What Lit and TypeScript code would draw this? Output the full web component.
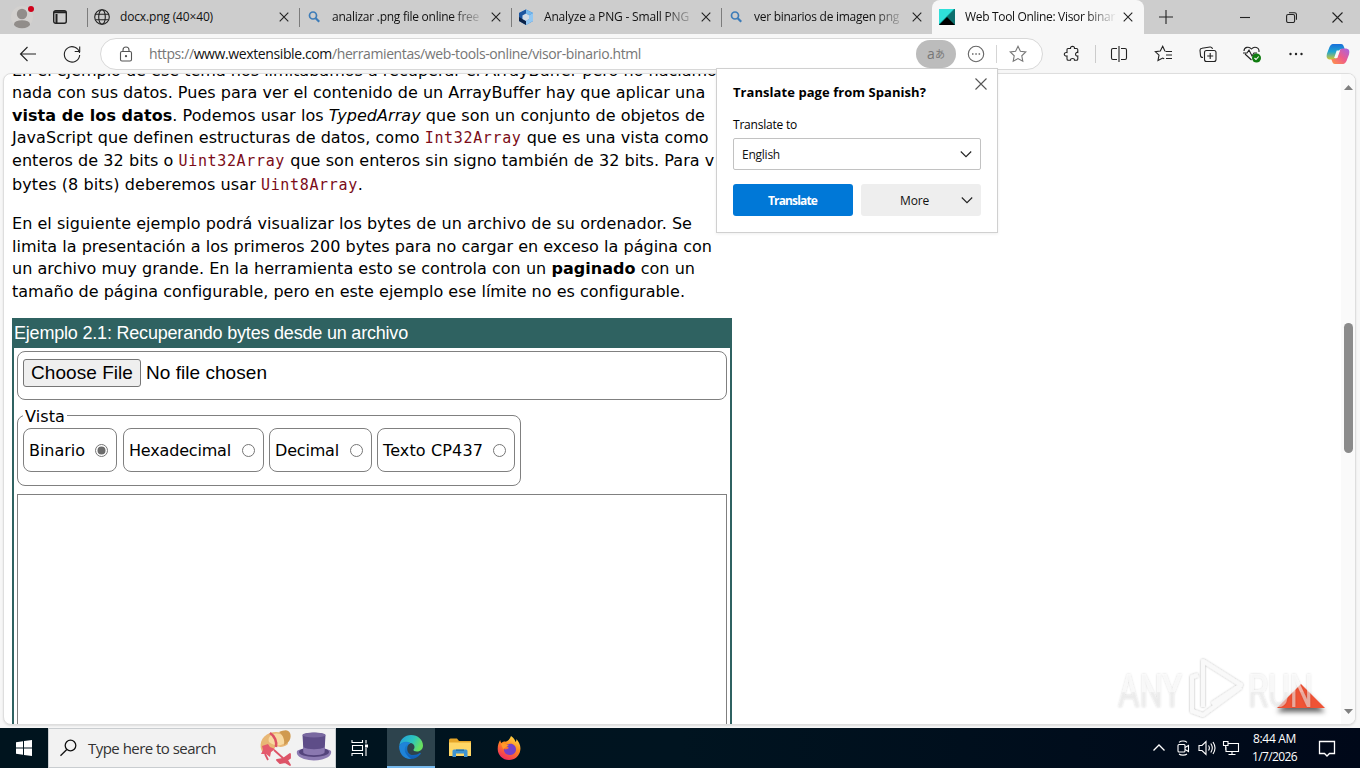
import { LitElement, html, svg, css } from "lit";
import { customElement, property } from "lit/decorators.js";

// Inline text that spreads its letters to fill a given width
@customElement("fit-text")
export class FitText extends LitElement {
    @property({ type: Number }) width = 0;

    static styles = css`
    :host {
      display: inline-block;
      white-space: pre;
    }
  `;

    firstUpdated() {
        const count = (this.textContent || "").length;
        if (!count || !this.width) return;
        const natural = this.getBoundingClientRect().width;
        this.style.letterSpacing = `${(this.width - natural) / count}px`;
    }

    render() {
        return html`<slot></slot>`;
    }
}

const icon = (size: number, content: unknown) => html`
  <svg class="icon" width=${size} height=${size} viewBox="0 0 ${size} ${size}">${content}</svg>
`;

const closeIcon = icon(10, svg`<path d="M.7.7l8.600 8.600M9.300.7L.7 9.300" />`);
const chevron = icon(12, svg`<path d="M.8 3.500L6 8.700l5.200-5.200" />`);

const globe = icon(16, svg`
  <circle cx="8" cy="8" r="7.300" /><ellipse cx="8" cy="8" rx="3.300" ry="7.300" />
  <path d="M1.500 5.300h13M1.500 10.700h13" />
`);
const lens = icon(16, svg`
  <g stroke="#3d7cb8" stroke-width="1.700"><circle cx="7" cy="6.500" r="3.500" /><path d="M9.700 9.200l3.500 3.600" stroke-width="2.200" /></g>
`);
const cube = icon(16, svg`
  <g stroke="none"><path d="M8 .5l7 3.500v8L8 16l-7-4V4z" fill="#2674c8" />
  <path d="M8 .5l7 3.500-4 2.300L8 4.600z" fill="#72b7ed" /><path d="M8 .5L1 4v8l3.500-2V6.500L8 4.600z" fill="#1c559f" />
  <path d="M1 12V8l3.500 2L8 12v4z" fill="#0c2348" /><path d="M11 6.300L15 4v8l-7 4v-4l3-2z" fill="#91c7f2" />
  <path d="M4.500 6.500L8 4.600l3 1.700V10l-3 2-3.500-2z" fill="#d2dbe5" /></g>
`);
const wextensible = icon(16, svg`
  <g stroke="none"><path d="M0 0h16v16H0z" fill="#0b8f8b" /><path d="M0 0h15L0 15z" fill="#2fe0da" />
  <path d="M16 0v16L8 8z" fill="#0d6f6d" /><path d="M0 16l8-8 8 8z" fill="#000" /></g>
`);

const tabs = [
    { favicon: globe, title: "docx.png (40×40)", text: 93, size: 212 },
    { favicon: lens, title: "analizar .png file online free", text: 147, size: 212 },
    { favicon: cube, title: "Analyze a PNG - Small PNG", text: 145, size: 210 },
    { favicon: lens, title: "ver binarios de imagen png", text: 145, size: 211 },
    { favicon: wextensible, title: "Web Tool Online: Visor binar", text: 150, size: 212, active: true },
];

const views = [
    { label: "Binario", text: 56, size: 94, checked: true },
    { label: "Hexadecimal", text: 102, size: 141 },
    { label: "Decimal", text: 64, size: 103 },
    { label: "Texto CP437", text: 100, size: 138 },
];

const puzzle = icon(20, svg`<path d="M6 4.500h2.500C8 1.700 13 1.700 12.500 4.500h2q1.300 0 1.300 1.300v2.700c-3-.7-3 4 0 3.500v3q0 1.300-1.300 1.300h-2c.4-2.500-4.300-2.500-4 0H6.300Q5 16.300 5 15v-3c-3.600.5-3.600-4 0-3.500v-3q0-1 1-1z" />`);
const split = icon(20, svg`<path d="M10 2v16M8 4.500H4q-1.500 0-1.500 1.500v8q0 1.500 1.500 1.500h4M12 4.500h4q1.500 0 1.500 1.500v8q0 1.500-1.500 1.500h-4" />`);
const favorites = icon(20, svg`<path d="M11 7.200L8.700 2.300 6.300 7l-5 .7L5 11.200l-1 5.300 4.700-2.500 1.500.8M11.500 7.500H18M12 11h6M12 14.500h6" />`);
const collections = icon(20, svg`
  <path d="M5 13.500c-2 0-2.500-1-2.500-2L2 6.300C2 5 3 4.300 4 4.200l8-1.200c1.500-.2 2.300.6 2.500 2" />
  <rect x="6.500" y="6.500" width="11.500" height="11" rx="2" /><path d="M12.200 9v6M9.200 12h6" />
`);
const health = icon(20, svg`
  <path d="M9.500 16L3 10M2 7c0-4 5-5 7.500-2C12 2 17.500 3 17 8M1 9h4l2-3 3 6 2-3h3" />
  <circle cx="14.500" cy="14" r="4.500" fill="#107c10" stroke="none" /><path d="M12.500 14l1.500 1.500 2.700-3" stroke="#fff" />
`);
const dots = icon(20, svg`<g fill="#222" stroke="none"><circle cx="4.500" cy="10" r="1.200" /><circle cx="10" cy="10" r="1.200" /><circle cx="15.500" cy="10" r="1.200" /></g>`);
const copilot = icon(24, svg`
  <defs>
    <linearGradient id="cool" x1="0" y1="0" x2="0" y2="1"><stop offset="0" stop-color="#186fdb" /><stop offset=".5" stop-color="#20a5cf" /><stop offset="1" stop-color="#d6c62f" /></linearGradient>
    <linearGradient id="warm" x1="1" y1="0" x2="0" y2="1"><stop offset="0" stop-color="#a463e6" /><stop offset=".5" stop-color="#ee5b8a" /><stop offset="1" stop-color="#ff9645" /></linearGradient>
  </defs>
  <g stroke="none"><path d="M8 2h7c2 0 2.500 1.500 3 3l.7 2h-3c-2 0-2.500 1-3 2.500L10.500 15c-.5 1.700-1.500 2.500-3 2.500H5c-4 0-5-2-4-6L3.500 5C4.700 2.500 6 2 8 2z" fill="url(#cool)" />
  <path d="M16 22H9c-2 0-2.500-1.500-3-3l-.7-2h3c2 0 2.500-1 3-2.500L13.500 9c.5-1.700 1.500-2.500 3-2.500H19c4 0 5 2 4 6L20.500 19c-1.200 2.500-2.500 3-4.500 3z" fill="url(#warm)" />
  <path d="M10.700 8.500h3.300l-2.600 7.500H8.100z" fill="#f7f7f7" /></g>
`);

const hats = html`
  <svg width="74" height="38" viewBox="0 0 74 38">
    <path d="M5 24C0 17 3 7 12 4c6-2 12-1 16 3l2 8c-5 4-9 3-12 2-3 5-7 9-13 7z" fill="#e8b775" />
    <path d="M11 13C8 5 21 1 26 8l2 5c-5 5-12 4-17 0z" fill="#f8d9a1" />
    <path d="M21 3c4 3 6 8 5 13 5-2 8-7 6-12-2-4-6-3-11-1z" fill="#d09a50" />
    <path d="M12 4c5 3 7 9 6 14" fill="none" stroke="#dc5064" stroke-width="2.500" />
    <path d="M4 17l6-2 2 3 5 2-4 3-1 5-4-3-5 0 2-4z" fill="#e45a6d" />
    <path d="M16 21l10 9M7 25l3 6M25 30l7-5v4l-3 2 3 5-5-3-5 1-3-3z" fill="#dd5468" stroke="#dd5468" stroke-width="1.800" stroke-linejoin="round" />
    <g transform="translate(1 1)">
      <path d="M38 21c4-4 30-4 34 0 1 4-3 7-9 8.500-6 1.300-12 1.300-18-.5-5-2-8-4-7-8z" fill="#8c7bb2" />
      <ellipse cx="55" cy="22" rx="15" ry="5" fill="#54447c" />
      <path d="M43.500 5c2-3 21-3 23 0l-1 17c-3 4-18 4-21 0z" fill="#5e4d88" />
      <ellipse cx="55" cy="5" rx="11.500" ry="2.500" fill="#7968a0" />
      <path d="M44 17c5 3 17 3 22 0l-.6 6c-4 3-17 3-21 0z" fill="#8a78b0" />
    </g>
  </svg>
`;

@customElement("app-root")
export class AppRoot extends LitElement {
    static styles = css`
    :host {
      display: flex;
      flex-direction: column;
      width: 1360px;
      height: 768px;
      overflow: hidden;
      background: #f7f7f7;
      font-family: "Open Sans", "Noto Sans", sans-serif;
      font-size: 12px;
      color: #111;
      --ink: #222;
    }
    * {
      box-sizing: border-box;
    }
    .icon {
      display: block;
      flex: none;
      fill: none;
      stroke: var(--ink);
      stroke-width: 1.1;
    }
    .tabstrip {
      display: flex;
      height: 34px;
      background: #cdcdcd;
    }
    .cell {
      display: flex;
      align-items: center;
      justify-content: center;
    }
    .avatar { width: 44px; }
    .actions { width: 43px; padding-right: 11px; }
    .tab {
      display: flex;
      align-items: center;
      padding: 0 10px 0 7px;
      position: relative;
    }
    .tab::before {
      content: "";
      position: absolute;
      left: 0;
      top: 8px;
      width: 1px;
      height: 19px;
      background: #7c7c7c;
    }
    .tab.active {
      background: #f7f7f7;
      border-radius: 8px 8px 0 0;
      padding-right: 11px;
    }
    .tab.active::before {
      display: none;
    }
    .title {
      flex: 1;
      margin-left: 10px;
      overflow: hidden;
      line-height: 20px;
      height: 20px;
    }
    .title.long {
      mask-image: linear-gradient(to right, #000 120px, transparent 152px);
    }
    .plus { width: 44px; margin-right: 34px; }
    .winbtn { width: 46px; }
    .toolbar {
      display: flex;
      align-items: center;
      height: 39px;
      padding-left: 6px;
      flex: none;
    }
    .address {
      display: flex;
      align-items: center;
      width: 943px;
      height: 32px;
      margin: 1px 0 0 7px;
      background: #fff;
      border: 1px solid #d8d8d8;
      border-radius: 16px;
    }
    .lock { width: 50px; }
    .url {
      flex: 1;
      font-size: 14px;
      line-height: 20px;
      margin-left: -2px;
      color: #767676;
    }
    .url b {
      font-weight: 400;
      color: #111;
    }
    .translate-badge {
      width: 40px;
      height: 28px;
      border-radius: 14px;
      background: #bcbcbc;
      color: #777;
      font-size: 14px;
      line-height: 20px;
    }
    .translate-badge small {
      font: 10px/20px "Noto Sans CJK JP", sans-serif;
    }
    .more-badge { width: 41px; height: 18px; border-right: 1px solid #d5d5d5; }
    .star { width: 41px; margin-right: 4px; }
    .tool { width: 44px; height: 18px; }
    .w-ext { width: 53px; padding-left: 5px; border-right: 1px solid #ccc; }
    .w-back { width: 44px; }
    .w-reload { width: 43px; }
    .w-split { width: 46px; }
    .w-copilot { width: 40px; }
    .frame {
      display: flex;
      flex: none;
      height: 652px;
      margin: 0 4px 3px 3px;
      background: #fff;
      border: 1px solid #dedede;
      border-radius: 8px;
      overflow: hidden;
      box-shadow: 0 1px 2px #ddd;
    }
    .page {
      flex: 1;
      padding-left: 8px;
      overflow: hidden;
      font: 16px "DejaVu Sans", Verdana, sans-serif;
      color: #000;
    }
    .prose {
      display: grid;
      line-height: 22px;
      margin: 0 0 17px;
      white-space: nowrap;
    }
    .first {
      grid-template-rows: 22px 23px 22px 23px 24px 22px;
      margin-top: -14px;
    }
    .second {
      grid-template-rows: 23px 22px 23px 22px;
      margin-bottom: 15px;
    }
    code {
      font-family: "DejaVu Sans Mono", monospace;
      font-size: 15px;
      letter-spacing: .65px;
      line-height: 20px;
      color: #7b0c18;
    }
    .example {
      width: 720px;
      height: 500px;
      border: 2px solid #2f6261;
      border-top: 0;
    }
    .example-title {
      height: 30px;
      line-height: 30px;
      color: #fff;
      background: #2f6261;
      font-family: "Liberation Sans", Arial, sans-serif;
      font-size: 18px;
    }
    .file-row {
      height: 49px;
      margin: 3px 3px 0;
      border: 1px solid #808080;
      border-radius: 8px;
      padding: 7px 5px;
      display: flex;
      gap: 5px;
      font: 19px/26px "Liberation Sans", Arial, sans-serif;
    }
    .choose {
      width: 118px;
      height: 28px;
      background: #efefef;
      border: 1px solid #767676;
      border-radius: 3px;
      padding: 0 7px;
    }
    .chosen {
      line-height: 28px;
    }
    .views {
      position: relative;
      display: flex;
      width: 504px;
      height: 71px;
      margin: 15px 3px 8px;
      border: 1px solid #808080;
      border-radius: 8px;
      padding: 12px 5px;
      gap: 5px;
    }
    .legend {
      position: absolute;
      top: -9px;
      left: 5px;
      height: 20px;
      line-height: 20px;
      padding: 0 2px;
      background: #fff;
    }
    .view {
      display: flex;
      align-items: center;
      justify-content: space-between;
      height: 44px;
      padding: 0 8px 0 5px;
      border: 1px solid #808080;
      border-radius: 8px;
    }
    .view.current {
      margin-right: 1px;
    }
    .radio {
      width: 13px;
      height: 13px;
      border: 1px solid #767676;
      border-radius: 50%;
      padding: 2px;
    }
    .radio.checked::before {
      content: "";
      display: block;
      height: 7px;
      border-radius: 50%;
      background: #6c6c6c;
      box-shadow: 0 0 0 .5px #6c6c6c;
    }
    .output {
      height: 400px;
      margin: 0 3px;
      border: 1px solid #808080;
    }
    .scrollbar {
      display: flex;
      flex-direction: column;
      align-items: center;
      width: 14px;
      background: #fafafa;
      padding: 10px 0 9px;
    }
    .thumb {
      width: 9px;
      height: 130px;
      margin: 233px 0 auto;
      border-radius: 5px;
      background: #8b8b8b;
    }
    .arrow {
      fill: #808080;
    }
    .popup {
      position: absolute;
      left: 716px;
      top: 68px;
      width: 282px;
      height: 165px;
      padding: 13px 16px 16px;
      background: #fff;
      border: 1px solid #d0d0d0;
      box-shadow: 0 1px 3px #0001;
    }
    .popup-head {
      display: flex;
      justify-content: space-between;
      font-weight: 700;
      font-size: 13px;
      line-height: 20px;
      color: #000;
      margin-bottom: 13px;
    }
    .popup-head .icon {
      margin: -4px -6px 0 0;
    }
    .popup-label {
      display: block;
      font-weight: 500;
      line-height: 20px;
      color: #000;
    }
    .select {
      display: flex;
      align-items: center;
      justify-content: space-between;
      height: 32px;
      margin: 3px 0 14px;
      padding: 0 8px;
      border: 1px solid #c2c2c2;
      border-radius: 2px;
    }
    .buttons {
      display: grid;
      grid-template-columns: 1fr 1fr;
      gap: 8px;
    }
    .button {
      display: flex;
      align-items: center;
      justify-content: center;
      height: 32px;
      border-radius: 3px;
      background: #eee;
    }
    .button.primary {
      background: #0078d7;
      color: #fff;
      font-weight: 700;
      padding-right: 1px;
    }
    .button.menu {
      justify-content: space-between;
      padding: 0 8px 0 39px;
    }
    .watermark {
      position: absolute;
      left: 1100px;
      top: 650px;
    }
    .taskbar {
      display: flex;
      height: 40px;
      background: linear-gradient(to right, #00141e, #001420 50%, #000819);
      color: #fff;
      --ink: #fff;
    }
    .start { width: 48px; }
    .search {
      display: flex;
      align-items: center;
      width: 288px;
      background: #f2f2f2;
      border: 1px solid #c9cdd0;
      padding: 0 3px 0 11px;
      font-size: 15px;
      color: #333;
      --ink: #111;
    }
    .search fit-text {
      margin: 0 auto 0 10px;
    }
    .task { width: 49px; }
    .task-view { width: 51px; padding-right: 3px; }
    .task.running {
      width: 48px;
      background: #2d434d;
      border-bottom: 2px solid #76b9ed;
    }
    .tray {
      display: flex;
      margin-left: auto;
      align-items: center;
    }
    .tray .cell { width: 24px; }
    .clock {
      width: 63px;
      line-height: 18px;
      text-align: center;
      font-size: 12px;
    }
    .tray .notice {
      width: 42px;
      padding-top: 1px;
    }
    .peek {
      width: 12px;
      height: 40px;
    }
  `;

    renderTab(tab: any) {
        return html`
      <div class="tab ${tab.active ? "active" : ""}" style="width:${tab.size}px">
        ${tab.favicon}
        <div class="title ${tab.text > 100 ? "long" : ""}"><fit-text width=${tab.text}>${tab.title}</fit-text></div>
        ${closeIcon}
      </div>
    `;
    }

    renderTabstrip() {
        return html`
      <div class="tabstrip">
        <div class="cell avatar">
          <svg width="24" height="26" viewBox="0 0 24 26">
            <circle cx="12" cy="13" r="11" fill="#d3d1cf" />
            <circle cx="12" cy="10" r="5.200" fill="#918d8a" /><ellipse cx="12" cy="20.200" rx="8" ry="4" fill="#918d8a" />
            <circle cx="21" cy="5" r="3" fill="#d0021b" />
          </svg>
        </div>
        <div class="cell actions">${icon(16, svg`<rect x="1.700" y="1.700" width="12.600" height="12.600" rx="2" stroke-width="1.400" /><path d="M2 3.300h12M4.500 5v9" stroke-width="2" />`)}</div>
        ${tabs.map((tab) => this.renderTab(tab))}
        <div class="cell plus">${icon(14, svg`<path d="M7 0v14M0 7h14" />`)}</div>
        <div class="cell winbtn">${icon(10, svg`<path d="M0 5.500h10" />`)}</div>
        <div class="cell winbtn">${icon(11, svg`<rect x=".6" y="2.500" width="8" height="8" rx="1.500" /><path d="M3 .8h5.500q2 0 2 2v5" />`)}</div>
        <div class="cell winbtn">${icon(11, svg`<path d="M.5.5l10 10M10.500.5l-10 10" />`)}</div>
      </div>
    `;
    }

    renderToolbar() {
        return html`
      <div class="toolbar">
        <div class="cell w-back">${icon(18, svg`<path d="M17 9H1.500M8.500 2L1.500 9l7 7" />`)}</div>
        <div class="cell w-reload">${icon(18, svg`<path d="M16.600 8A7.700 7.700 0 1 0 16.700 10M16.700 1.500V6.500H11.700" />`)}</div>
        <div class="address">
          <div class="cell lock">${icon(16, svg`<g stroke="#555"><rect x="2.500" y="5.500" width="11" height="9.500" rx="1.500" /><path d="M5 5.500V4a3 3 0 0 1 6 0v1.500" /><circle cx="8" cy="10.200" r=".6" fill="#555" /></g>`)}</div>
          <div class="url"><fit-text width="492">https://<b>www.wextensible.com</b>/herramientas/web-tools-online/visor-binario.html</fit-text></div>
          <div class="cell translate-badge">a<small>あ</small></div>
          <div class="cell more-badge">${icon(18, svg`<g stroke="#666"><circle cx="9" cy="9" r="7.700" /><path d="M5 9h1.500M8.300 9h1.500M11.600 9h1.500" stroke-width="1.500" /></g>`)}</div>
          <div class="cell star">${icon(18, svg`<path stroke="#777" d="M9 1.300l2.400 5 5.400.7-4 3.800 1 5.500L9 13.600l-4.800 2.700 1-5.500-4-3.800 5.400-.7z" />`)}</div>
        </div>
        <div class="cell tool w-ext">${puzzle}</div>
        <div class="cell tool w-split">${split}</div>
        <div class="cell tool">${favorites}</div>
        <div class="cell tool">${collections}</div>
        <div class="cell tool">${health}</div>
        <div class="cell tool">${dots}</div>
        <div class="cell tool w-copilot">${copilot}</div>
      </div>
    `;
    }

    renderPage() {
        return html`
      <div class="page">
        <p class="prose first">
          <span><fit-text width="713">En el ejemplo de ese tema nos limitábamos a recuperar el ArrayBuffer pero no hacíamos</fit-text></span>
          <span><fit-text width="693">nada con sus datos. Pues para ver el contenido de un ArrayBuffer hay que aplicar una</fit-text></span>
          <span><fit-text width="693"><b>vista de los datos</b>. Podemos usar los <i>TypedArray</i> que son un conjunto de objetos de</fit-text></span>
          <span><fit-text width="697">JavaScript que definen estructuras de datos, como <code>Int32Array</code> que es una vista como</fit-text></span>
          <span><fit-text width="703">enteros de 32 bits o <code>Uint32Array</code> que son enteros sin signo también de 32 bits. Para v</fit-text></span>
          <span><fit-text width="352">bytes (8 bits) deberemos usar <code>Uint8Array</code>.</fit-text></span>
        </p>
        <p class="prose second">
          <span><fit-text width="680">En el siguiente ejemplo podrá visualizar los bytes de un archivo de su ordenador. Se</fit-text></span>
          <span><fit-text width="700">limita la presentación a los primeros 200 bytes para no cargar en exceso la página con</fit-text></span>
          <span><fit-text width="683">un archivo muy grande. En la herramienta esto se controla con un <b>paginado</b> con un</fit-text></span>
          <span><fit-text width="673">tamaño de página configurable, pero en este ejemplo ese límite no es configurable.</fit-text></span>
        </p>
        <div class="example">
          <div class="example-title"><fit-text width="394">Ejemplo 2.1: Recuperando bytes desde un archivo</fit-text></div>
          <div class="file-row">
            <div class="choose"><fit-text width="102">Choose File</fit-text></div>
            <fit-text class="chosen" width="121">No file chosen</fit-text>
          </div>
          <div class="views">
            <span class="legend"><fit-text width="40">Vista</fit-text></span>
            ${views.map((view) => html`
              <div class="view ${view.checked ? "current" : ""}" style="width:${view.size}px">
                <fit-text width=${view.text}>${view.label}</fit-text>
                <span class="radio ${view.checked ? "checked" : ""}"></span>
              </div>
            `)}
          </div>
          <div class="output"></div>
        </div>
      </div>
    `;
    }

    renderPopup() {
        return html`
      <div class="popup">
        <div class="popup-head">
          <fit-text width="193">Translate page from Spanish?</fit-text>
          ${icon(12, svg`<path d="M.5.5l11 11M11.500.5l-11 11" stroke="#555" />`)}
        </div>
        <span class="popup-label"><fit-text width="64">Translate to</fit-text></span>
        <div class="select"><fit-text width="38">English</fit-text>${chevron}</div>
        <div class="buttons">
          <div class="button primary"><fit-text width="49">Translate</fit-text></div>
          <div class="button menu"><fit-text width="29">More</fit-text>${chevron}</div>
        </div>
      </div>
    `;
    }

    renderWatermark() {
        return html`
      <svg class="watermark" width="232" height="74" viewBox="0 0 232 74">
        <defs>
          <filter id="soft" x="-20%" y="-20%" width="140%" height="160%"><feDropShadow dx="0" dy="4" stdDeviation="2.500" flood-opacity=".6" /></filter>
          <filter id="halo" x="-10%" y="-10%" width="120%" height="120%"><feDropShadow dx="0" dy="0" stdDeviation="1.200" flood-opacity=".3" /></filter>
          <linearGradient id="glass" x1="0" y1="0" x2="0" y2="1"><stop offset=".52" stop-color="#fff" /><stop offset=".54" stop-color="#ececec" /></linearGradient>
        </defs>
        <path d="M201 34l24 24h-48z" fill="#ef5336" filter="url(#soft)" />
        <g fill="url(#glass)" fill-opacity=".55" font-family="Roboto, sans-serif" font-size="47" filter="url(#halo)">
          <text x="18" y="57" textLength="64" lengthAdjust="spacingAndGlyphs">ANY</text>
          <text x="148" y="57" textLength="65" lengthAdjust="spacingAndGlyphs">RUN</text>
        </g>
        <g fill="none" stroke="#f9f9f9" stroke-width="4" stroke-linejoin="round" filter="url(#halo)">
          <path d="M103 57V11l38 24-29 19M92 58V27l6-2M141 37l-38 28-11-4v-4" />
        </g>
      </svg>
    `;
    }

    renderTaskbar() {
        return html`
      <div class="taskbar">
        <div class="cell start">
          <svg width="16" height="16" viewBox="0 0 16 16" fill="#fff"><path d="M0 2.300L7 1.300v6.200H0zM8 1.100L16 0v7.500H8zM0 8.500h7v6.200l-7-1zM8 8.500h8V16l-8-1.100z" /></svg>
        </div>
        <div class="search">
          ${icon(18, svg`<circle cx="10.500" cy="6.500" r="5.300" stroke-width="1.300" /><path d="M6.800 10.500L.5 16.800" stroke-width="1.300" />`)}
          <fit-text width="128">Type here to search</fit-text>
          ${hats}
        </div>
        <div class="cell task-view">${icon(18, svg`<path d="M1 1v2.500h10.500V1M1 17v-2.500h10.500V17M1.500 6.500h10v5h-10zM15 1v3.500M15 9v8" /><path d="M14 5.500h3v3h-3z" fill="#fff" stroke="none" />`)}</div>
        <div class="cell task running">
          <svg width="24" height="24" viewBox="0 0 24 24">
            <defs>
              <linearGradient id="sea" x1="0" y1="0" x2="1" y2=".4"><stop offset="0" stop-color="#239bdf" /><stop offset=".6" stop-color="#2cc5bd" /><stop offset="1" stop-color="#67df60" /></linearGradient>
              <linearGradient id="deep" x1="0" y1="0" x2="0" y2="1"><stop offset="0" stop-color="#1b86d6" /><stop offset="1" stop-color="#0f5bb4" /></linearGradient>
            </defs>
            <path d="M.3 11C1 4 6 0 12 0c7 0 12 5 12 10.500 0 3.500-2.500 6-6 6-2.500 0-4-1-3.500-2 2-2 1-6-3-6.500C6 7.300 1 9 .3 11z" fill="url(#sea)" />
            <path d="M.3 11C2 6 9 6 11.500 8.500 7 9 6.500 20 14 20c3 0 5-.8 7-2.200 1 .1 1 .6.4 1.500C18 23.500 13 25 8 23.300 2 21 0 16 .3 11z" fill="url(#deep)" />
            <path d="M11.500 8.500C6 8.500 4 15 7.500 19.500c2 2.600 4 3.800 4.500 4.500C4 24 .5 18 .3 11 3 6.500 9 6.500 11.500 8.500z" fill="#1f84d8" />
          </svg>
        </div>
        <div class="cell task">
          <svg width="22" height="20" viewBox="0 0 22 20">
            <path d="M0 2q0-1.500 1.500-1.500H8L10 3h12v5H0z" fill="#e5a528" /><path d="M0 4.500h22V18H0z" fill="#ffd766" />
            <path d="M3.500 19v-6q0-1.500 1.500-1.500h12q1.500 0 1.500 1.500v6H15v-3.500H7V19z" fill="#3e94d1" /><path d="M7 11.500h8v1.500H7z" fill="#2572ab" />
          </svg>
        </div>
        <div class="cell task">
          <svg width="24" height="26" viewBox="0 0 24 26">
            <defs><linearGradient id="fox" x1=".8" y1="0" x2=".3" y2="1"><stop offset="0" stop-color="#ffe04a" /><stop offset=".45" stop-color="#ff8a1d" /><stop offset="1" stop-color="#f22762" /></linearGradient></defs>
            <path d="M14 1c3 2 4 4 4.500 6 1-1 1-2 .8-3C22 7 24 11 23.300 15 22.500 21 18 25 12 25 5.500 25 .7 20 .7 14c0-4 1-6.500 2.500-9 .2 1.500.6 2.200 1.200 3C6 6.500 8 6.500 8.500 6.700 11 6 13 4 14 1z" fill="url(#fox)" />
            <path d="M7 12c2-3 4-2 5-3 4-1 7 2 7 5.500S16 20 12.500 20 6.500 17 7 14c2 1 3 0 5-1-1-1-3-2-5-1z" fill="#7441c9" />
            <path d="M4 9c3-2 5 0 8 2-3 0-3 2-6 3z" fill="#ff9a2b" />
          </svg>
        </div>
        <div class="tray">
          <div class="cell">${icon(14, svg`<path d="M1.500 9.500L7 4l5.500 5.500" stroke-width="1.300" />`)}</div>
          <div class="cell">${icon(16, svg`<rect x="3" y="4.500" width="7" height="7.500" rx="1" /><path d="M10 7.500L13.500 5.500v6L10 9.500M4 2.300C6 .6 10 .6 12 2.300M4 14c2 1.500 6 1.500 8 0" />`)}</div>
          <div class="cell">${icon(18, svg`<path d="M1 6.500h3l4-4v13l-4-4H1zM10.500 6.500q1.800 2.500 0 5M12.800 4.500q3 4.500 0 9M15 3q4 6 0 12" />`)}</div>
          <div class="cell">${icon(18, svg`<path d="M6 4.500h10.500v8H4V8M10 12.500V15M6.500 15.500h7M1.500 2.500h4.500v4H1.500zM3.700 6.500V11" />`)}</div>
          <div class="clock"><fit-text width="43">8:44 AM</fit-text><br /><fit-text width="45">1/7/2026</fit-text></div>
          <div class="cell notice">${icon(18, svg`<path d="M1.500 1.500h15v12H11.500L9 16 6.500 13.500H1.500z" stroke-width="1.300" />`)}</div>
          <div class="peek"></div>
        </div>
      </div>
    `;
    }

    render() {
        return html`
      ${this.renderTabstrip()}
      ${this.renderToolbar()}
      <div class="frame">
        ${this.renderPage()}
        <div class="scrollbar">
          <svg class="arrow" width="9" height="6" viewBox="0 0 9 6"><path d="M0 6L4.500 1 9 6z" /></svg>
          <div class="thumb"></div>
          <svg class="arrow" width="9" height="6" viewBox="0 0 9 6"><path d="M0 0h9L4.500 5z" /></svg>
        </div>
      </div>
      ${this.renderTaskbar()}
      ${this.renderPopup()}
      ${this.renderWatermark()}
    `;
    }
}
